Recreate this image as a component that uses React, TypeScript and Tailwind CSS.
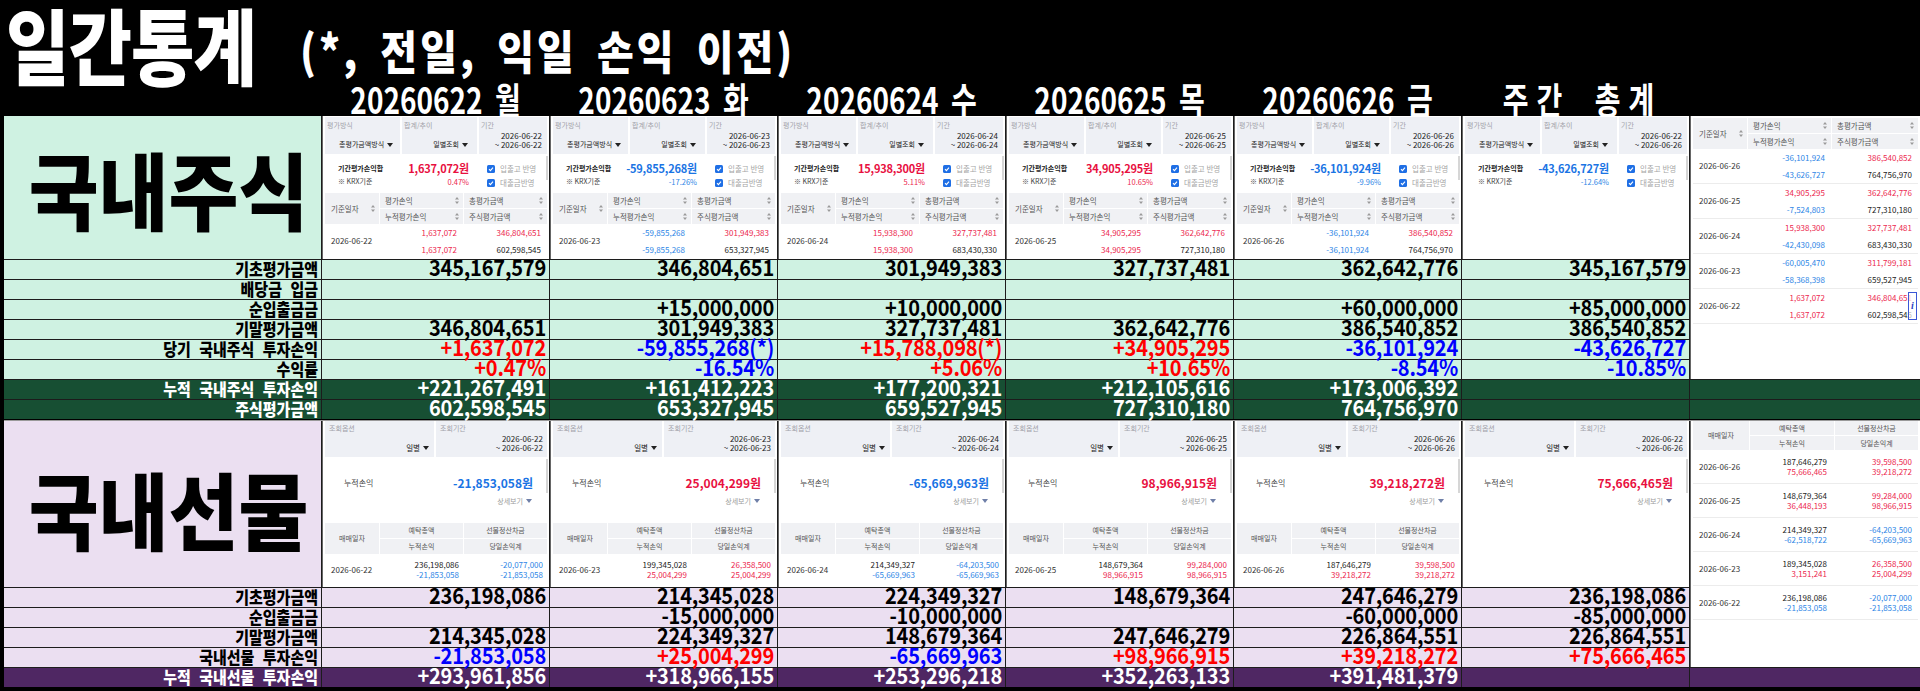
import React from "react";

type Tone = "r" | "b" | "k";
type V = [string, Tone] | null;

const FONT = "font-['Noto_Sans_CJK_KR','Noto_Sans',sans-serif]";
const COLS = "grid grid-cols-[317px_repeat(6,227px)_1fr] gap-px";

const MINT = "bg-[#cff2e2]";
const DKGREEN = "bg-[#174f33]";
const LAV = "bg-[#ebdff1]";
const PURPLE = "bg-[#4f2763]";

const shotTone = (t: Tone) =>
  t === "r" ? "text-[#ec1f4e]" : t === "b" ? "text-[#2e86e6]" : "text-[#222]";
const bigTone = (t: Tone) => (t === "r" ? "text-[#e8103f]" : "text-[#1a74e4]");
const rowTone = (t: Tone) =>
  t === "r" ? "text-[#ff0000]" : t === "b" ? "text-[#0000ff]" : "text-black";

const Caret = ({ color = "#222" }: { color?: string }) => (
  <svg width="6" height="4" viewBox="0 0 6 4" className="shrink-0">
    <path d="M0 0H6L3 4Z" fill={color} />
  </svg>
);

const Sort = () => (
  <svg width="4" height="7" viewBox="0 0 4 7" className="shrink-0">
    <path d="M2 0L4 2.6H0Z M2 7L0 4.4H4Z" fill="#9a9a9a" />
  </svg>
);

const Check = () => (
  <svg width="8" height="8" viewBox="0 0 8 8" className="shrink-0">
    <rect width="8" height="8" rx="1.5" fill="#1f6fe5" />
    <path d="M2 4.2L3.4 5.6L6 2.6" stroke="#fff" strokeWidth="1.1" fill="none" />
  </svg>
);

/* ---------- stock screenshot pieces ---------- */

function StockTop({ from, to }: { from: string; to: string }) {
  return (
    <div className="h-[37px] shrink-0 grid grid-cols-[75px_75px_1fr] gap-[2px]">
      <div className="bg-[#eef0f5] pl-[2px] pt-[5px] flex flex-col">
        <span className="text-[7px] leading-none text-[#a2a2aa]">평가방식</span>
        <span className="mt-[12px] pl-[12px] text-[7px] leading-none text-[#222] flex items-center gap-[3px] whitespace-nowrap">
          총평가금액방식 <Caret />
        </span>
      </div>
      <div className="bg-[#eef0f5] pl-[2px] pt-[5px] flex flex-col">
        <span className="text-[7px] leading-none text-[#a2a2aa]">합계/추이</span>
        <span className="mt-[12px] self-end pr-[9px] text-[7px] leading-none text-[#222] flex items-center gap-[3px] whitespace-nowrap">
          일별조회 <Caret />
        </span>
      </div>
      <div className="bg-[#eef0f5] pl-[2px] pr-[5px] pt-[5px] flex flex-col">
        <span className="text-[7px] leading-none text-[#a2a2aa]">기간</span>
        <span className="mt-[2px] self-end text-right text-[8px] leading-[9px] text-[#222] whitespace-nowrap">
          {from}
          <br />~ {to}
        </span>
      </div>
    </div>
  );
}

function StockSummary({ total, pct, t }: { total: string; pct: string; t: Tone }) {
  return (
    <div className="h-[39px] shrink-0 flex pt-[8px]">
      <div className="w-[70px] pl-[13px] flex flex-col">
        <span className="h-[13px] flex items-center text-[7px] font-bold text-[#222] whitespace-nowrap">기간평가손익합</span>
        <span className="h-[13px] flex items-center text-[7px] text-[#444] whitespace-nowrap">※ KRX기준</span>
      </div>
      <div className="w-[74px] flex flex-col items-end">
        <span className={`h-[13px] flex items-center text-[11px] font-bold leading-none whitespace-nowrap tracking-[-0.2px] ${bigTone(t)}`}>
          {total}
        </span>
        <span className={`h-[13px] flex items-center text-[7.5px] ${shotTone(t)}`}>{pct}</span>
      </div>
      <div className="pl-[18px] flex flex-col">
        <span className="h-[13px] flex items-center gap-[5px]">
          <Check />
          <span className="text-[7.5px] text-[#a5a5a5] whitespace-nowrap">입출고 반영</span>
        </span>
        <span className="h-[15px] flex items-center gap-[5px]">
          <Check />
          <span className="text-[7.5px] text-[#a5a5a5] whitespace-nowrap">대출금반영</span>
        </span>
      </div>
    </div>
  );
}

function StockHead({ cols }: { cols: string }) {
  const cell = "bg-[#f0f1f4] flex items-center justify-between text-[7.5px] text-[#555] leading-none whitespace-nowrap";
  return (
    <div className={`h-[31px] shrink-0 grid ${cols} grid-rows-2 gap-px`}>
      <div className={`${cell} row-span-2 pl-[6px] pr-[4px]`}>
        기준일자 <Sort />
      </div>
      <div className={`${cell} pl-[5px] pr-[4px]`}>
        평가손익 <Sort />
      </div>
      <div className={`${cell} pl-[5px] pr-[4px]`}>
        총평가금액 <Sort />
      </div>
      <div className={`${cell} pl-[5px] pr-[4px]`}>
        누적평가손익 <Sort />
      </div>
      <div className={`${cell} pl-[5px] pr-[4px]`}>
        주식평가금액 <Sort />
      </div>
    </div>
  );
}

function StockEntry({
  date,
  a,
  b,
  cols,
  h,
  line,
}: {
  date: string;
  a: [V, V];
  b: [V, V];
  cols: string;
  h: string;
  line?: boolean;
}) {
  const val = (v: V) => (
    <span className={`h-[17px] flex items-center text-[8px] leading-none ${v ? shotTone(v[1]) : ""}`}>
      {v ? v[0] : ""}
    </span>
  );
  return (
    <div className={`${h} shrink-0 grid ${cols} ${line ? "border-b border-[#ececec]" : ""}`}>
      <div className="flex items-center pl-[6px] text-[8px] text-[#333]">{date}</div>
      <div className="flex flex-col items-end justify-center pr-[5px]">
        {val(a[0])}
        {val(a[1])}
      </div>
      <div className="flex flex-col items-end justify-center pr-[6px]">
        {val(b[0])}
        {val(b[1])}
      </div>
    </div>
  );
}

type StockShotData = {
  d: string;
  total: string;
  pct: string;
  t: Tone;
  a: string;
  b: [string, string];
};

function StockShot({ s }: { s: StockShotData }) {
  return (
    <div className="bg-white h-full flex flex-col pt-px px-[2px] border-l border-[#666] relative overflow-hidden">
      <StockTop from={s.d} to={s.d} />
      <StockSummary total={s.total} pct={s.pct} t={s.t} />
      <StockHead cols="grid-cols-[54px_83px_1fr]" />
      <StockEntry
        date={s.d}
        cols="grid-cols-[54px_83px_1fr]"
        h="h-[34px]"
        a={[
          [s.a, s.t],
          [s.a, s.t],
        ]}
        b={[
          [s.b[0], "r"],
          [s.b[1], "k"],
        ]}
      />
      <div className="absolute right-px top-[40px] w-[2px] h-[24px] bg-[#d6d6d6]" />
    </div>
  );
}

function StockWeekly() {
  return (
    <div className="bg-white h-full flex flex-col pt-px px-[2px] border-l border-[#666] relative overflow-hidden">
      <StockTop from="2026-06-22" to="2026-06-26" />
      <StockSummary total="-43,626,727원" pct="-12.64%" t="b" />
      <div className="absolute right-px top-[40px] w-[2px] h-[24px] bg-[#d6d6d6]" />
    </div>
  );
}

const stockList: { d: string; a: [V, V]; b: [string, string] }[] = [
  { d: "2026-06-26", a: [["-36,101,924", "b"], ["-43,626,727", "b"]], b: ["386,540,852", "764,756,970"] },
  { d: "2026-06-25", a: [["34,905,295", "r"], ["-7,524,803", "b"]], b: ["362,642,776", "727,310,180"] },
  { d: "2026-06-24", a: [["15,938,300", "r"], ["-42,430,098", "b"]], b: ["327,737,481", "683,430,330"] },
  { d: "2026-06-23", a: [["-60,005,470", "b"], ["-58,368,398", "b"]], b: ["311,799,181", "659,527,945"] },
  { d: "2026-06-22", a: [["1,637,072", "r"], ["1,637,072", "r"]], b: ["346,804,651", "602,598,545"] },
];

function StockList() {
  return (
    <div className="bg-white h-full flex flex-col pt-[2px] px-[2px] border-l border-[#666] relative overflow-hidden">
      <StockHead cols="grid-cols-[54px_83px_1fr]" />
      {stockList.map((e) => (
        <StockEntry
          key={e.d}
          date={e.d}
          cols="grid-cols-[54px_83px_1fr]"
          h="h-[35px]"
          line
          a={e.a}
          b={[
            [e.b[0], "r"],
            [e.b[1], "k"],
          ]}
        />
      ))}
      <div className="absolute right-[3px] top-[176px] w-[9px] h-[28px] border border-[#3b57d6] bg-white/70 flex items-center justify-center">
        <span className="text-[10px] italic font-bold text-[#2a42c4] font-['Liberation_Serif',serif] leading-none">i</span>
      </div>
    </div>
  );
}

/* ---------- futures screenshot pieces ---------- */

function FutTop({ from, to }: { from: string; to: string }) {
  return (
    <div className="h-[36px] shrink-0 grid grid-cols-[109px_1fr] gap-[2px]">
      <div className="bg-[#eef0f5] pl-[4px] pr-[5px] pt-[4px] flex flex-col">
        <span className="text-[7px] leading-none text-[#a2a2aa]">조회옵션</span>
        <span className="mt-[12px] self-end text-[7.5px] leading-none text-[#222] flex items-center gap-[3px]">
          일별 <Caret />
        </span>
      </div>
      <div className="bg-[#eef0f5] pl-[4px] pr-[4px] pt-[4px] flex flex-col">
        <span className="text-[7px] leading-none text-[#a2a2aa]">조회기간</span>
        <span className="mt-[2px] self-end text-right text-[8px] leading-[9px] text-[#222] whitespace-nowrap">
          {from}
          <br />~ {to}
        </span>
      </div>
    </div>
  );
}

function FutSummary({ total, t }: { total: string; t: Tone }) {
  return (
    <div className="h-[66px] shrink-0 flex flex-col pt-[18px]">
      <div className="h-[16px] flex items-center justify-between pl-[19px] pr-[14px]">
        <span className="text-[8px] text-[#444]">누적손익</span>
        <span className={`text-[12px] font-bold leading-none whitespace-nowrap ${bigTone(t)}`}>{total}</span>
      </div>
      <div className="mt-[4px] h-[12px] flex items-center justify-end gap-[3px] pr-[15px] text-[7px] text-[#9c9c9c]">
        상세보기 <Caret color="#6f7fa8" />
      </div>
    </div>
  );
}

function FutHead({ cols, h }: { cols: string; h: string }) {
  const cell = "bg-[#f0f1f4] flex items-center justify-center text-[7px] text-[#555] leading-none whitespace-nowrap";
  return (
    <div className={`${h} shrink-0 grid ${cols} grid-rows-2 gap-px`}>
      <div className={`${cell} row-span-2`}>매매일자</div>
      <div className={cell}>예탁총액</div>
      <div className={cell}>선물정산차금</div>
      <div className={cell}>누적손익</div>
      <div className={cell}>당일손익계</div>
    </div>
  );
}

function FutEntry({
  date,
  a,
  a2,
  b1,
  b2,
  cols,
  h,
  line,
  pr,
}: {
  date: string;
  a: string;
  a2: V;
  b1: V;
  b2: V;
  cols: string;
  h: string;
  line?: boolean;
  pr: [string, string];
}) {
  const val = (v: V) => (
    <span className={`h-[10px] flex items-center text-[8px] leading-none ${v ? shotTone(v[1]) : ""}`}>
      {v ? v[0] : ""}
    </span>
  );
  return (
    <div className={`${h} shrink-0 grid ${cols} ${line ? "border-b border-[#ececec]" : ""}`}>
      <div className="flex items-center pl-[6px] text-[8px] text-[#333]">{date}</div>
      <div className={`flex flex-col items-end justify-center ${pr[0]}`}>
        {val([a, "k"])}
        {val(a2)}
      </div>
      <div className={`flex flex-col items-end justify-center ${pr[1]}`}>
        {val(b1)}
        {val(b2)}
      </div>
    </div>
  );
}

type FutShotData = { d: string; total: string; t: Tone; a: string; a2: V; b1: V; b2: V };

function FutShot({ s }: { s: FutShotData }) {
  return (
    <div className="bg-white h-full flex flex-col px-[2px] border-l border-[#666] relative overflow-hidden">
      <FutTop from={s.d} to={s.d} />
      <FutSummary total={s.total} t={s.t} />
      <FutHead cols="grid-cols-[54px_83px_1fr]" h="h-[31px]" />
      <FutEntry
        date={s.d}
        a={s.a}
        a2={s.a2}
        b1={s.b1}
        b2={s.b2}
        cols="grid-cols-[54px_83px_1fr]"
        h="h-[32px]"
        pr={["pr-[3px]", "pr-[4px]"]}
      />
      <div className="absolute right-px top-[38px] w-[2px] h-[34px] bg-[#d6d6d6]" />
    </div>
  );
}

function FutWeekly() {
  return (
    <div className="bg-white h-full flex flex-col px-[2px] border-l border-[#666] relative overflow-hidden">
      <FutTop from="2026-06-22" to="2026-06-26" />
      <FutSummary total="75,666,465원" t="r" />
      <div className="absolute right-px top-[38px] w-[2px] h-[34px] bg-[#d6d6d6]" />
    </div>
  );
}

const futList: { d: string; a: string; a2: V; b1: V; b2: V }[] = [
  { d: "2026-06-26", a: "187,646,279", a2: ["75,666,465", "r"], b1: ["39,598,500", "r"], b2: ["39,218,272", "r"] },
  { d: "2026-06-25", a: "148,679,364", a2: ["36,448,193", "r"], b1: ["99,284,000", "r"], b2: ["98,966,915", "r"] },
  { d: "2026-06-24", a: "214,349,327", a2: ["-62,518,722", "b"], b1: ["-64,203,500", "b"], b2: ["-65,669,963", "b"] },
  { d: "2026-06-23", a: "189,345,028", a2: ["3,151,241", "r"], b1: ["26,358,500", "r"], b2: ["25,004,299", "r"] },
  { d: "2026-06-22", a: "236,198,086", a2: ["-21,853,058", "b"], b1: ["-20,077,000", "b"], b2: ["-21,853,058", "b"] },
];

function FutList() {
  return (
    <div className="bg-white h-full flex flex-col px-[2px] border-l border-[#666] overflow-hidden">
      <FutHead cols="grid-cols-[56px_84px_1fr]" h="h-[29px]" />
      {futList.map((e) => (
        <FutEntry
          key={e.d}
          date={e.d}
          a={e.a}
          a2={e.a2}
          b1={e.b1}
          b2={e.b2}
          cols="grid-cols-[56px_84px_1fr]"
          h="h-[34px]"
          line
          pr={["pr-[6px]", "pr-[6px]"]}
        />
      ))}
    </div>
  );
}

/* ---------- spreadsheet rows ---------- */

function LabelCell({ text, bg, dark }: { text: string; bg: string; dark?: boolean }) {
  return (
    <div className={`${bg} flex items-center justify-end pr-[3px]`}>
      <span
        className={`inline-block scale-y-115 -translate-y-px text-[15px] font-black leading-[15px] whitespace-nowrap [word-spacing:5px] ${
          dark ? "text-white" : "text-black"
        }`}
      >
        {text}
      </span>
    </div>
  );
}

function ValCell({ v, bg, dark }: { v: V; bg: string; dark?: boolean }) {
  return (
    <div className={`${bg} flex items-center justify-end pr-[3px]`}>
      {v && (
        <span
          className={`inline-block scale-y-110 -translate-y-[3px] text-[20px] font-bold leading-[14px] whitespace-nowrap tracking-[-0.2px] ${
            dark ? "text-white" : rowTone(v[1])
          }`}
        >
          {v[0]}
        </span>
      )}
    </div>
  );
}

const k = (s: string): V => [s, "k"];

const stockShots: StockShotData[] = [
  { d: "2026-06-22", total: "1,637,072원", pct: "0.47%", t: "r", a: "1,637,072", b: ["346,804,651", "602,598,545"] },
  { d: "2026-06-23", total: "-59,855,268원", pct: "-17.26%", t: "b", a: "-59,855,268", b: ["301,949,383", "653,327,945"] },
  { d: "2026-06-24", total: "15,938,300원", pct: "5.11%", t: "r", a: "15,938,300", b: ["327,737,481", "683,430,330"] },
  { d: "2026-06-25", total: "34,905,295원", pct: "10.65%", t: "r", a: "34,905,295", b: ["362,642,776", "727,310,180"] },
  { d: "2026-06-26", total: "-36,101,924원", pct: "-9.96%", t: "b", a: "-36,101,924", b: ["386,540,852", "764,756,970"] },
];

const stockRows: { label: string; vals: V[] }[] = [
  {
    label: "기초평가금액",
    vals: [k("345,167,579"), k("346,804,651"), k("301,949,383"), k("327,737,481"), k("362,642,776"), k("345,167,579")],
  },
  { label: "배당금 입금", vals: [null, null, null, null, null, null] },
  { label: "순입출금금", vals: [null, k("+15,000,000"), k("+10,000,000"), null, k("+60,000,000"), k("+85,000,000")] },
  {
    label: "기말평가금액",
    vals: [k("346,804,651"), k("301,949,383"), k("327,737,481"), k("362,642,776"), k("386,540,852"), k("386,540,852")],
  },
  {
    label: "당기 국내주식 투자손익",
    vals: [
      ["+1,637,072", "r"],
      ["-59,855,268(*)", "b"],
      ["+15,788,098(*)", "r"],
      ["+34,905,295", "r"],
      ["-36,101,924", "b"],
      ["-43,626,727", "b"],
    ],
  },
  {
    label: "수익률",
    vals: [
      ["+0.47%", "r"],
      ["-16.54%", "b"],
      ["+5.06%", "r"],
      ["+10.65%", "r"],
      ["-8.54%", "b"],
      ["-10.85%", "b"],
    ],
  },
];

const stockDark: { label: string; vals: string[] }[] = [
  { label: "누적 국내주식 투자손익", vals: ["+221,267,491", "+161,412,223", "+177,200,321", "+212,105,616", "+173,006,392"] },
  { label: "주식평가금액", vals: ["602,598,545", "653,327,945", "659,527,945", "727,310,180", "764,756,970"] },
];

const futShots: FutShotData[] = [
  { d: "2026-06-22", total: "-21,853,058원", t: "b", a: "236,198,086", a2: ["-21,853,058", "b"], b1: ["-20,077,000", "b"], b2: ["-21,853,058", "b"] },
  { d: "2026-06-23", total: "25,004,299원", t: "r", a: "199,345,028", a2: ["25,004,299", "r"], b1: ["26,358,500", "r"], b2: ["25,004,299", "r"] },
  { d: "2026-06-24", total: "-65,669,963원", t: "b", a: "214,349,327", a2: ["-65,669,963", "b"], b1: ["-64,203,500", "b"], b2: ["-65,669,963", "b"] },
  { d: "2026-06-25", total: "98,966,915원", t: "r", a: "148,679,364", a2: ["98,966,915", "r"], b1: ["99,284,000", "r"], b2: ["98,966,915", "r"] },
  { d: "2026-06-26", total: "39,218,272원", t: "r", a: "187,646,279", a2: ["39,218,272", "r"], b1: ["39,598,500", "r"], b2: ["39,218,272", "r"] },
];

const futRows: { label: string; vals: V[] }[] = [
  {
    label: "기초평가금액",
    vals: [k("236,198,086"), k("214,345,028"), k("224,349,327"), k("148,679,364"), k("247,646,279"), k("236,198,086")],
  },
  { label: "순입출금금", vals: [null, k("-15,000,000"), k("-10,000,000"), null, k("-60,000,000"), k("-85,000,000")] },
  {
    label: "기말평가금액",
    vals: [k("214,345,028"), k("224,349,327"), k("148,679,364"), k("247,646,279"), k("226,864,551"), k("226,864,551")],
  },
  {
    label: "국내선물 투자손익",
    vals: [
      ["-21,853,058", "b"],
      ["+25,004,299", "r"],
      ["-65,669,963", "b"],
      ["+98,966,915", "r"],
      ["+39,218,272", "r"],
      ["+75,666,465", "r"],
    ],
  },
];

const futDark = {
  label: "누적 국내선물 투자손익",
  vals: ["+293,961,856", "+318,966,155", "+253,296,218", "+352,263,133", "+391,481,379"],
};

const headers = ["20260622 월", "20260623 화", "20260624 수", "20260625 목", "20260626 금"];

export default function App() {
  return (
    <div className={`w-[1920px] h-[691px] bg-black overflow-hidden pl-[4px] ${FONT}`}>
      {/* title */}
      <div className="h-[82px] flex items-start">
        <div className="w-[296px] pl-[2px]">
          <span className="inline-block origin-top scale-y-120 mt-[6px] text-[69px] font-black leading-[62px] text-white tracking-[-1px]">
            일간통계
          </span>
        </div>
        <span className="inline-block origin-top scale-y-115 mt-[29px] text-[40px] font-black leading-[36px] text-white tracking-[3px] [word-spacing:8px]">
          (*, 전일, 익일 손익 이전)
        </span>
      </div>
      <div className={`${COLS} h-[34px]`}>
        <div />
        {headers.map((h) => (
          <div key={h} className="flex items-center justify-center">
            <span className="inline-block scale-y-130 -translate-y-px text-[28px] font-bold leading-[24px] text-white whitespace-nowrap [word-spacing:6px]">
              {h}
            </span>
          </div>
        ))}
        <div className="flex items-center justify-center pl-[14px]">
          <span className="inline-block scale-y-130 -translate-y-px text-[28px] font-bold leading-[24px] text-white whitespace-nowrap tracking-[8px] [word-spacing:10px]">
            주간 총계
          </span>
        </div>
        <div />
      </div>

      {/* 국내주식 */}
      <div className={`${COLS} grid-rows-[143px_repeat(8,19px)] bg-[#1c1c1c]`}>
        <div className="col-start-8 row-start-1 row-span-7">
          <StockList />
        </div>
        <div className={`${MINT} flex items-center justify-center pl-[12px]`}>
          <span className="inline-block scale-y-110 text-[76px] font-black leading-[76px] text-black whitespace-nowrap">
            국내주식
          </span>
        </div>
        {stockShots.map((s) => (
          <StockShot key={s.d} s={s} />
        ))}
        <StockWeekly />
        {stockRows.map((r) => (
          <React.Fragment key={r.label}>
            <LabelCell text={r.label} bg={MINT} />
            {r.vals.map((v, i) => (
              <ValCell key={i} v={v} bg={MINT} />
            ))}
          </React.Fragment>
        ))}
        {stockDark.map((r) => (
          <React.Fragment key={r.label}>
            <LabelCell text={r.label} bg={DKGREEN} dark />
            {r.vals.map((v, i) => (
              <ValCell key={i} v={k(v)} bg={DKGREEN} dark />
            ))}
            <div className={DKGREEN} />
            <div className={DKGREEN} />
          </React.Fragment>
        ))}
      </div>

      {/* 국내선물 */}
      <div className={`${COLS} grid-rows-[166px_repeat(5,19px)] bg-[#1c1c1c] mt-px border-t border-[#9a9a9a]`}>
        <div className="col-start-8 row-start-1 row-span-5">
          <FutList />
        </div>
        <div className={`${LAV} flex items-center justify-center pl-[12px] pt-[8px]`}>
          <span className="inline-block scale-y-110 text-[76px] font-black leading-[76px] text-black whitespace-nowrap">
            국내선물
          </span>
        </div>
        {futShots.map((s) => (
          <FutShot key={s.d} s={s} />
        ))}
        <FutWeekly />
        {futRows.map((r) => (
          <React.Fragment key={r.label}>
            <LabelCell text={r.label} bg={LAV} />
            {r.vals.map((v, i) => (
              <ValCell key={i} v={v} bg={LAV} />
            ))}
          </React.Fragment>
        ))}
        <LabelCell text={futDark.label} bg={PURPLE} dark />
        {futDark.vals.map((v, i) => (
          <ValCell key={i} v={k(v)} bg={PURPLE} dark />
        ))}
        <div className={PURPLE} />
        <div className={PURPLE} />
      </div>
    </div>
  );
}
